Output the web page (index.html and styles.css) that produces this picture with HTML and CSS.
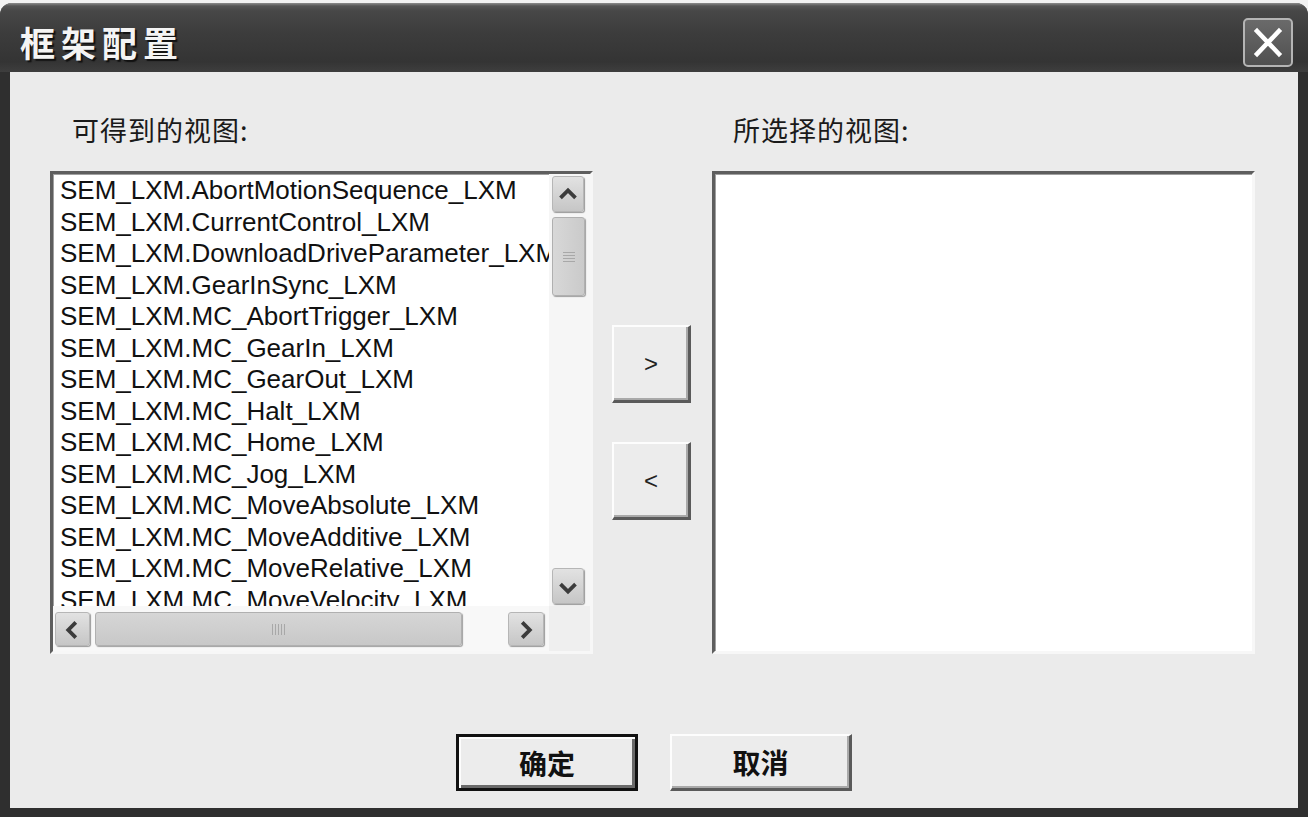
FILE: index.html
```html
<!DOCTYPE html>
<html lang="zh-CN">
<head>
<meta charset="utf-8">
<title>框架配置</title>
<link rel="stylesheet" href="styles.css">
</head>
<body>
<div class="window">
  <div class="titlebar">
    <span class="title">框架配置</span>
    <div class="close">
      <svg width="46" height="45" viewBox="0 0 46 45"><path d="M12 11 L34 34 M34 11 L12 34" stroke="#fff" stroke-width="4.5" stroke-linecap="square" fill="none"/></svg>
    </div>
  </div>
  <div class="client">
    <div class="panes">
      <div class="col">
        <div class="label">可得到的视图:</div>
        <div class="listbox">
          <div class="list-area">
            <div class="items">
              <div class="item">SEM_LXM.AbortMotionSequence_LXM</div>
              <div class="item">SEM_LXM.CurrentControl_LXM</div>
              <div class="item">SEM_LXM.DownloadDriveParameter_LXM</div>
              <div class="item">SEM_LXM.GearInSync_LXM</div>
              <div class="item">SEM_LXM.MC_AbortTrigger_LXM</div>
              <div class="item">SEM_LXM.MC_GearIn_LXM</div>
              <div class="item">SEM_LXM.MC_GearOut_LXM</div>
              <div class="item">SEM_LXM.MC_Halt_LXM</div>
              <div class="item">SEM_LXM.MC_Home_LXM</div>
              <div class="item">SEM_LXM.MC_Jog_LXM</div>
              <div class="item">SEM_LXM.MC_MoveAbsolute_LXM</div>
              <div class="item">SEM_LXM.MC_MoveAdditive_LXM</div>
              <div class="item">SEM_LXM.MC_MoveRelative_LXM</div>
              <div class="item">SEM_LXM.MC_MoveVelocity_LXM</div>
            </div>
            <div class="vscroll">
              <div class="sbtn vbtn"><svg width="32" height="36" viewBox="0 0 32 36"><path d="M8 21 L16 13 L24 21" stroke="#3c3c3c" stroke-width="4" fill="none"/></svg></div>
              <div class="thumb vthumb"><span class="grip-h"></span></div>
              <div class="track"></div>
              <div class="sbtn vbtn"><svg width="32" height="36" viewBox="0 0 32 36"><path d="M8 15 L16 23 L24 15" stroke="#3c3c3c" stroke-width="4" fill="none"/></svg></div>
            </div>
          </div>
          <div class="hscroll">
            <div class="hbar">
              <div class="sbtn hbtn-l"><svg width="35" height="34" viewBox="0 0 35 34"><path d="M21 9 L13 17 L21 25" stroke="#3c3c3c" stroke-width="4" fill="none"/></svg></div>
              <div class="thumb hthumb"><span class="grip-v"></span></div>
              <div class="track"></div>
              <div class="sbtn hbtn-r"><svg width="36" height="34" viewBox="0 0 36 34"><path d="M14 9 L22 17 L14 25" stroke="#3c3c3c" stroke-width="4" fill="none"/></svg></div>
            </div>
            <div class="corner"></div>
          </div>
        </div>
      </div>
      <div class="movebtns">
        <div class="pbtn move">&gt;</div>
        <div class="pbtn move">&lt;</div>
      </div>
      <div class="col col-right">
        <div class="label">所选择的视图:</div>
        <div class="listbox"></div>
      </div>
    </div>
    <div class="actions">
      <div class="pbtn action default">确定</div>
      <div class="pbtn action">取消</div>
    </div>
  </div>
</div>
</body>
</html>
```

FILE: styles.css
```css
html, body {
  margin: 0;
  padding: 0;
  background: #f2f2f2;
}

body {
  width: 1308px;
  height: 817px;
  overflow: hidden;
  font-family: "Liberation Sans", "Noto Sans CJK SC", sans-serif;
}

.window {
  margin-top: 3px;
  height: 814px;
  box-sizing: border-box;
  background: #2f2f2f;
  border-radius: 12px 12px 0 0;
  display: flex;
  flex-direction: column;
  padding: 0 10px 9px 10px;
  box-shadow: inset 0 2px 0 #8a8a8a;
}

.titlebar {
  height: 69px;
  display: flex;
  align-items: center;
  justify-content: space-between;
  margin: 0 -10px;
  padding: 0 15px 0 20px;
  border-radius: 12px 12px 0 0;
  background: linear-gradient(#8c8c8c 0, #555 3px, #474747 8px, #3c3c3c 45%, #343434 85%, #3e3e3e 100%);
}

.title {
  font-family: "Noto Sans CJK SC", sans-serif;
  font-weight: 700;
  font-size: 35px;
  letter-spacing: 6px;
  color: #f4f4f4;
  text-shadow: 2px 2px 1px #111;
  line-height: 40px;
  margin-top: 8px;
}

.close {
  width: 46px;
  height: 45px;
  border: 2px solid #b4b4b4;
  border-radius: 5px;
  background: linear-gradient(#6a6a6a, #505050);
  margin-top: 10px;
  display: flex;
}

.client {
  flex: 1;
  background: #ebebeb;
  display: flex;
  flex-direction: column;
  padding: 41px 0 17px 40px;
}

.panes {
  display: flex;
}

.col {
  width: 543px;
  display: flex;
  flex-direction: column;
}

.col-right {
  margin-left: 21px;
}

.label {
  font-family: "Noto Sans CJK SC", sans-serif;
  font-size: 27px;
  line-height: 34px;
  height: 34px;
  color: #1a1a1a;
  padding-left: 22px;
  margin-bottom: 24px;
  letter-spacing: 1px;
}

.col-right .label {
  padding-left: 21px;
}

.listbox {
  height: 483px;
  box-sizing: border-box;
  background: #fff;
  border-style: solid;
  border-width: 3px;
  border-color: #5e5e5e #f7f7f7 #f7f7f7 #5e5e5e;
  box-shadow: inset 1px 1px 0 #a0a0a0;
  display: flex;
  flex-direction: column;
}

.list-area {
  display: flex;
  height: 432px;
}

.items {
  width: 496px;
  overflow: hidden;
  padding: 1px 0 0 7px;
  box-sizing: border-box;
}

.item {
  font-size: 26px;
  line-height: 31.5px;
  height: 31.5px;
  color: #111;
  white-space: nowrap;
  letter-spacing: 0;
}

.vscroll {
  width: 41px;
  background: #f6f6f6;
  display: flex;
  flex-direction: column;
  padding: 2px 6px 2px 3px;
  box-sizing: border-box;
}

.sbtn {
  box-sizing: border-box;
  border: 1px solid #b6b6b6;
  border-radius: 3px;
  background: linear-gradient(#e2e2e2, #c6c6c6);
  box-shadow: 1px 1px 1px #9a9a9a;
  display: flex;
}

.vbtn {
  height: 36px;
  width: 32px;
}

.thumb {
  box-sizing: border-box;
  border: 1px solid #b0b0b0;
  border-radius: 3px;
  background: linear-gradient(90deg, #d8d8d8, #cacaca);
  box-shadow: 1px 1px 1px #a0a0a0;
  display: flex;
  align-items: center;
  justify-content: center;
}

.vthumb {
  margin-top: 5px;
  height: 79px;
  width: 33px;
}

.track {
  flex: 1;
}

.grip-h {
  width: 12px;
  height: 10px;
  background: repeating-linear-gradient(#a8a8a8 0 1px, transparent 1px 3px);
}

.grip-v {
  width: 14px;
  height: 11px;
  background: repeating-linear-gradient(90deg, #a8a8a8 0 1px, transparent 1px 3px);
}

.hscroll {
  display: flex;
  height: 45px;
  background: #f6f6f6;
}

.hbar {
  width: 496px;
  display: flex;
  padding: 6px 5px 4px 2px;
  box-sizing: border-box;
  background: #f8f8f8;
}

.hbtn-l {
  width: 35px;
  height: 34px;
}

.hbtn-r {
  width: 36px;
  height: 34px;
}

.hthumb {
  margin-left: 5px;
  width: 367px;
  height: 34px;
  background: linear-gradient(#d6d6d6, #c8c8c8);
}

.corner {
  width: 41px;
  background: #efefef;
}

.movebtns {
  width: 79px;
  margin-left: 19px;
  padding-top: 212px;
  display: flex;
  flex-direction: column;
  gap: 39px;
}

.pbtn {
  box-sizing: border-box;
  background: #ececec;
  border-style: solid;
  border-width: 2px 3px 3px 2px;
  border-color: #fdfdfd #5a5a5a #5a5a5a #fdfdfd;
  box-shadow: inset -2px -2px 0 #a9a9a9;
  display: flex;
  align-items: center;
  justify-content: center;
  color: #222;
}

.move {
  width: 79px;
  height: 78px;
  font-family: "Liberation Sans", sans-serif;
  font-size: 24px;
}

.actions {
  margin-top: auto;
  display: flex;
  justify-content: center;
  gap: 32px;
  padding-right: 40px;
}

.action {
  width: 182px;
  height: 57px;
  font-family: "Noto Sans CJK SC", sans-serif;
  font-weight: 700;
  font-size: 28px;
  color: #111;
}

.default {
  border: 3px solid #111;
  box-shadow: inset 2px 2px 0 #fdfdfd, inset -3px -3px 0 #6a6a6a;
}
```
